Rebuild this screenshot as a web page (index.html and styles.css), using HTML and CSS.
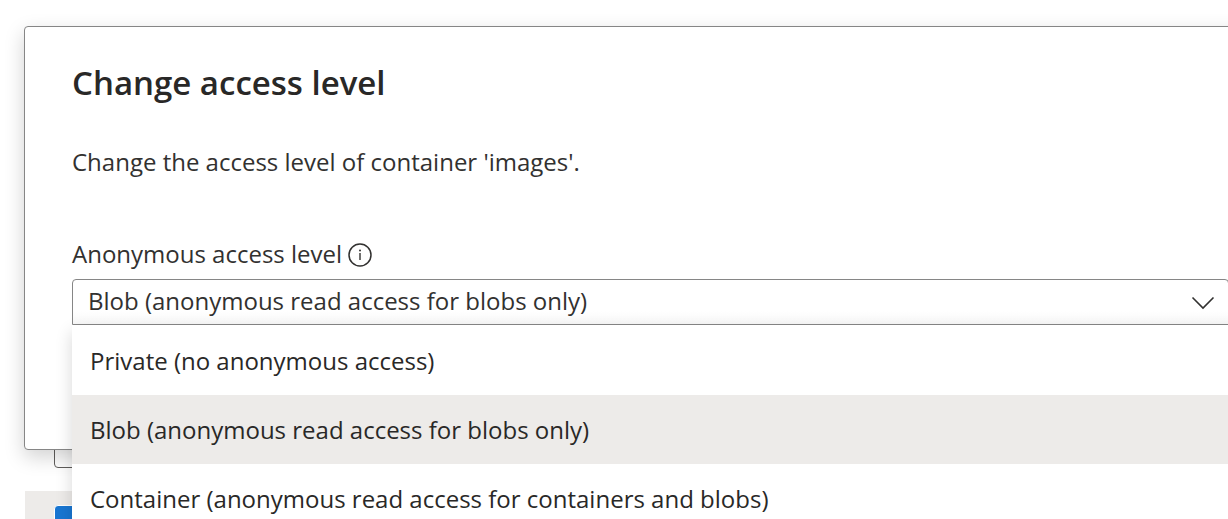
FILE: index.html
```
<!DOCTYPE html>
<html lang="en">
<head>
<meta charset="utf-8">
<title>Change access level</title>
<link rel="stylesheet" href="styles.css">
</head>
<body>
<main class="page">
  <div class="filter-box"></div>
  <div class="list-row"><span class="row-check"></span></div>
</main>
<section class="dialog" role="dialog" aria-labelledby="dialog-title">
  <h1 class="dialog-title" id="dialog-title">Change access level</h1>
  <p class="dialog-text">Change the access level of container 'images'.</p>
  <div class="field-head">
    <label class="field-label" for="level">Anonymous access level</label>
    <svg class="info" viewBox="0 0 24 24" aria-hidden="true">
      <circle cx="12" cy="12" r="11" fill="none" stroke="#323130" stroke-width="1.5"/>
      <path d="M12 10v7" stroke="#323130" stroke-width="1.4"/>
      <circle cx="12" cy="7.500" r="1" fill="#323130"/>
    </svg>
  </div>
  <div class="combo">
    <select class="combo-select" id="level">
      <option>Blob (anonymous read access for blobs only)</option>
    </select>
    <svg class="chevron" viewBox="0 0 24 14" aria-hidden="true">
      <path d="M1.500 1.500l10.500 10.500 10.500-10.500" fill="none" stroke="#323130" stroke-width="1.6"/>
    </svg>
    <ul class="menu" role="listbox" aria-label="Anonymous access level">
      <li class="menu-item" role="option">Private (no anonymous access)</li>
      <li class="menu-item menu-item-selected" role="option" aria-selected="true">Blob (anonymous read access for blobs only)</li>
      <li class="menu-item" role="option">Container (anonymous read access for containers and blobs)</li>
    </ul>
  </div>
</section>
</body>
</html>
```
FILE: styles.css
```
* { box-sizing: border-box; }
html { height: 100%; }
body {
  height: 100%;
  margin: 0;
  overflow: hidden;
  position: relative;
  background: #fff;
  color: #323130;
  font: 24px/32px "Segoe UI", "Open Sans", sans-serif;
}
.page { padding: 420px 0 0 25px; }
.filter-box {
  height: 48px;
  margin-left: 29px;
  border: 1px solid #605e5c;
  border-radius: 4px;
}
.list-row {
  height: 70px;
  margin-top: 23px;
  padding: 14px 29px;
  background: #edebe9;
}
.row-check {
  display: block;
  width: 42px;
  height: 42px;
  border: 1px solid #fff;
  border-radius: 4px;
  background: #1976d2;
}
.dialog {
  position: absolute;
  top: 26px;
  left: 24px;
  right: -49px;
  padding: 36px 47px 124px;
  border: 1px solid #868686;
  border-radius: 4px;
  background: #fff;
  box-shadow: 0 7px 20px rgba(0, 0, 0, 0.18);
}
.dialog-title {
  margin: 0;
  color: #292827;
  font-size: 33px;
  font-weight: 600;
  line-height: 40px;
}
.dialog-text { margin: 43px 0 60px; }
.field-head {
  display: flex;
  align-items: center;
  gap: 6px;
  margin-bottom: 9px;
}
.info { width: 24px; height: 24px; margin-top: 2px; }
.combo { position: relative; }
.combo-select {
  display: block;
  width: 100%;
  height: 46px;
  padding: 0 48px 2px 15px;
  appearance: none;
  border: 1px solid #868686;
  border-radius: 4px 4px 0 0;
  background: linear-gradient(#fff 70%, #f8f8f8);
  color: inherit;
  font: inherit;
}
.chevron {
  position: absolute;
  top: 17px;
  right: 14px;
  width: 24px;
  height: 14px;
}
.menu {
  position: absolute;
  top: 100%;
  left: 0;
  right: -24px;
  margin: 0;
  padding: 1px 0 0;
  list-style: none;
  background: #fff;
  box-shadow: 0 7px 16px rgba(0, 0, 0, 0.16);
}
.menu-item {
  padding: 19px 18px 18px;
  color: #292827;
}
.menu-item-selected { background: #edebe9; }
```
